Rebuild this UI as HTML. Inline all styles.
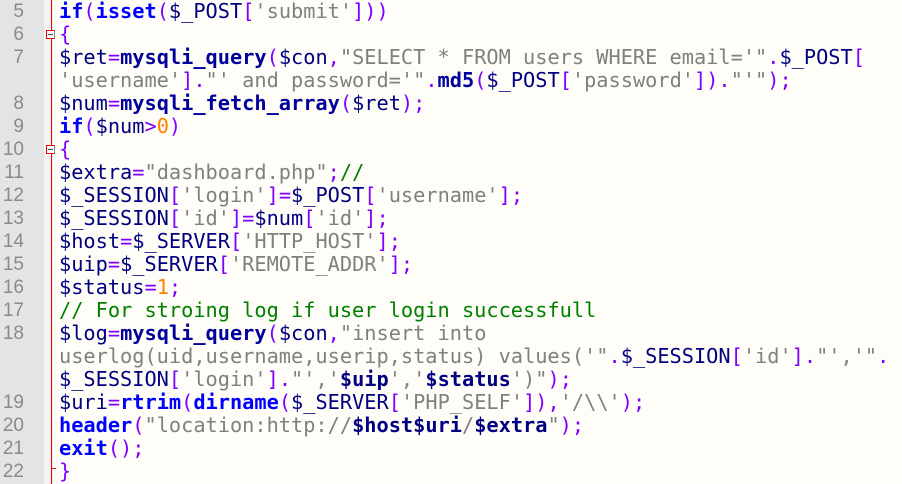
<!DOCTYPE html><html><head><style>
body{margin:0;width:902px;height:484px;overflow:hidden;background:#fffdf7;position:relative;font-family:"Liberation Mono",monospace}
#g{position:absolute;left:0;top:0;width:44px;height:484px;background:#e4e4e4}
#f{position:absolute;left:44px;top:0;width:9px;height:484px;background:#f3f3f3}
#r{position:absolute;left:51px;top:0;width:1px;height:484px;background:#e00}
.bx{position:absolute;left:46px;width:9px;height:9px;border:1px solid #e00;border-right-color:#888;background:#fff;box-sizing:border-box}
.bx:after{content:"";position:absolute;left:1px;top:3px;width:5px;height:1px;background:#555}
.ln{position:absolute;left:0;width:24px;text-align:right;color:#8a8a8a;font-family:"Liberation Sans",sans-serif;font-size:19px;line-height:23px}
pre{position:absolute;left:59px;top:0;margin:0;font-size:20.3px;line-height:23px;color:#000080}
b{color:#0000ff}
.k{color:#00009a;font-weight:bold}
.o{color:#8000ff}
.s{color:#808080}
.n{color:#ff8000}
.c{color:#008000}
.v{color:#000080;font-weight:bold}
</style></head><body>
<div id="g"></div><div id="f"></div><div id="r"></div>
<div class="bx" style="top:30px"></div><div class="bx" style="top:145px"></div>
<div style="position:absolute;left:51px;top:468px;width:5px;height:1px;background:#e00"></div>
<div class="ln" style="top:0">5</div><div class="ln" style="top:23px">6</div><div class="ln" style="top:46px">7</div>
<div class="ln" style="top:92px">8</div><div class="ln" style="top:115px">9</div><div class="ln" style="top:138px">10</div>
<div class="ln" style="top:161px">11</div><div class="ln" style="top:184px">12</div><div class="ln" style="top:207px">13</div>
<div class="ln" style="top:230px">14</div><div class="ln" style="top:253px">15</div><div class="ln" style="top:276px">16</div>
<div class="ln" style="top:299px">17</div><div class="ln" style="top:322px">18</div><div class="ln" style="top:391px">19</div>
<div class="ln" style="top:414px">20</div><div class="ln" style="top:437px">21</div><div class="ln" style="top:460px">22</div>
<pre><b>if</b><span class="o">(</span><b>isset</b><span class="o">(</span>$_POST<span class="o">[</span><span class="s">'submit'</span><span class="o">]))</span>
<span class="o">{</span>
$ret<span class="o">=</span><span class="k">mysqli_query</span><span class="o">(</span>$con<span class="o">,</span><span class="s">"SELECT * FROM users WHERE email='"</span><span class="o">.</span>$_POST<span class="o">[</span>
<span class="s">'username'</span><span class="o">].</span><span class="s">"' and password='"</span><span class="o">.</span><span class="k">md5</span><span class="o">(</span>$_POST<span class="o">[</span><span class="s">'password'</span><span class="o">]).</span><span class="s">"'"</span><span class="o">);</span>
$num<span class="o">=</span><span class="k">mysqli_fetch_array</span><span class="o">(</span>$ret<span class="o">);</span>
<b>if</b><span class="o">(</span>$num<span class="o">&gt;</span><span class="n">0</span><span class="o">)</span>
<span class="o">{</span>
$extra<span class="o">=</span><span class="s">"dashboard.php"</span><span class="o">;</span><span class="c">//</span>
$_SESSION<span class="o">[</span><span class="s">'login'</span><span class="o">]=</span>$_POST<span class="o">[</span><span class="s">'username'</span><span class="o">];</span>
$_SESSION<span class="o">[</span><span class="s">'id'</span><span class="o">]=</span>$num<span class="o">[</span><span class="s">'id'</span><span class="o">];</span>
$host<span class="o">=</span>$_SERVER<span class="o">[</span><span class="s">'HTTP_HOST'</span><span class="o">];</span>
$uip<span class="o">=</span>$_SERVER<span class="o">[</span><span class="s">'REMOTE_ADDR'</span><span class="o">];</span>
$status<span class="o">=</span><span class="n">1</span><span class="o">;</span>
<span class="c">// For stroing log if user login successfull</span>
$log<span class="o">=</span><span class="k">mysqli_query</span><span class="o">(</span>$con<span class="o">,</span><span class="s">"insert into</span>
<span class="s">userlog(uid,username,userip,status) values('"</span><span class="o">.</span>$_SESSION<span class="o">[</span><span class="s">'id'</span><span class="o">].</span><span class="s">"','"</span><span class="o">.</span>
$_SESSION<span class="o">[</span><span class="s">'login'</span><span class="o">].</span><span class="s">"','<span class="v">$uip</span>','<span class="v">$status</span>')"</span><span class="o">);</span>
$uri<span class="o">=</span><b>rtrim</b><span class="o">(</span><b>dirname</b><span class="o">(</span>$_SERVER<span class="o">[</span><span class="s">'PHP_SELF'</span><span class="o">]),</span><span class="s">'/\\'</span><span class="o">);</span>
<b>header</b><span class="o">(</span><span class="s">"location:http://<span class="v">$host$uri</span>/<span class="v">$extra</span>"</span><span class="o">);</span>
<b>exit</b><span class="o">();</span>
<span class="o">}</span></pre>
</body></html>
